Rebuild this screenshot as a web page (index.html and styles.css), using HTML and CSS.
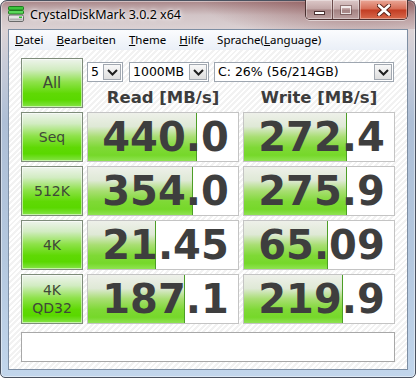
FILE: index.html
```html
<!DOCTYPE html>
<html lang="de">
<head>
  <meta charset="UTF-8">
  <title>CrystalDiskMark 3.0.2 x64</title>
  <link rel="stylesheet" href="styles.css">
</head>
<body>
  <div class="window">
    <div class="titlebar">
      <svg class="app-icon" width="16" height="16" viewBox="0 0 16 16">
        <rect x="0.5" y="0.5" width="15" height="3.5" rx="1" fill="#3cc43c" stroke="#1f7a1f"/>
        <rect x="0.5" y="4.5" width="15" height="3.5" rx="1" fill="#5ad85a" stroke="#1f7a1f"/>
        <rect x="0.5" y="9" width="15" height="6.5" rx="1.5" fill="#e4e4e4" stroke="#6a6a6a"/>
        <rect x="1.5" y="12.5" width="13" height="2" fill="#b0b0b0"/>
        <rect x="11" y="10.5" width="3" height="1.5" fill="#2fbf2f"/>
      </svg>
      <span class="title">CrystalDiskMark 3.0.2 x64</span>
      <div class="controls">
        <div class="ctl ctl-min"><span class="glyph-min"></span></div>
        <div class="ctl ctl-max"><span class="glyph-max"></span></div>
        <div class="ctl ctl-close">
          <svg width="14" height="12" viewBox="0 0 14 12">
            <path d="M2 1.5 L12 10.5 M12 1.5 L2 10.5" stroke="#5a2218" stroke-width="4.5" stroke-linecap="round"/>
            <path d="M2 1.5 L12 10.5 M12 1.5 L2 10.5" stroke="#fff" stroke-width="2.6" stroke-linecap="round"/>
          </svg>
        </div>
      </div>
    </div>

    <div class="client">
      <ul class="menu">
        <li><u>D</u>atei</li>
        <li><u>B</u>earbeiten</li>
        <li><u>T</u>heme</li>
        <li><u>H</u>ilfe</li>
        <li>Sprache(<u>L</u>anguage)</li>
      </ul>

      <div class="bench">
        <div class="btn btn-all">All</div>
        <div class="head">
          <div class="selects">
            <div class="sel sel-count"><span class="sel-text">5</span><span class="sel-arrow"><svg width="11" height="7" viewBox="0 0 11 7"><path d="M1 1 L5.5 5.5 L10 1" fill="none" stroke="#1e1e1e" stroke-width="2"/></svg></span></div>
            <div class="sel sel-size"><span class="sel-text">1000MB</span><span class="sel-arrow"><svg width="11" height="7" viewBox="0 0 11 7"><path d="M1 1 L5.5 5.5 L10 1" fill="none" stroke="#1e1e1e" stroke-width="2"/></svg></span></div>
            <div class="sel sel-drive"><span class="sel-text">C: 26% (56/214GB)</span><span class="sel-arrow"><svg width="11" height="7" viewBox="0 0 11 7"><path d="M1 1 L5.5 5.5 L10 1" fill="none" stroke="#1e1e1e" stroke-width="2"/></svg></span></div>
          </div>
          <div class="col-titles">
            <div>Read [MB/s]</div>
            <div>Write [MB/s]</div>
          </div>
        </div>

        <div class="btn">Seq</div>
        <div class="val"><div class="bar" style="width:109px"></div><span>440.0</span></div>
        <div class="val"><div class="bar" style="width:103px"></div><span>272.4</span></div>

        <div class="btn">512K</div>
        <div class="val"><div class="bar" style="width:105px"></div><span>354.0</span></div>
        <div class="val"><div class="bar" style="width:103px"></div><span>275.9</span></div>

        <div class="btn">4K</div>
        <div class="val"><div class="bar" style="width:68px"></div><span>21.45</span></div>
        <div class="val"><div class="bar" style="width:84px"></div><span>65.09</span></div>

        <div class="btn btn-two">4K<br>QD32</div>
        <div class="val"><div class="bar" style="width:97px"></div><span>187.1</span></div>
        <div class="val"><div class="bar" style="width:99px"></div><span>219.9</span></div>
      </div>

      <div class="comment"></div>
    </div>
  </div>
</body>
</html>
```

FILE: styles.css
```css
html, body {
  margin: 0;
  padding: 0;
  width: 416px;
  height: 378px;
  overflow: hidden;
  background: #fff;
}
.window {
  box-sizing: border-box;
  width: 416px;
  height: 378px;
  display: flex;
  flex-direction: column;
  padding: 0 7px 7px 7px;
  border: 1px solid #4a5260;
  border-radius: 7px 7px 5px 5px;
  background: linear-gradient(180deg, #a98688 0px, #d2c4c6 14px, #dcd3d5 30px, #c9ccd8 60px, #aebfd6 120px, #b4c8df 260px, #c2d6ec 378px);
  box-shadow: inset 0 0 0 1px rgba(255, 255, 255, 0.45);
}
.titlebar {
  height: 28px;
  display: flex;
  align-items: flex-start;
  flex: none;
  background: radial-gradient(ellipse 160px 40px at 360px 0, rgba(120, 50, 50, 0.55), rgba(120, 50, 50, 0) 100%);
  margin: 0 -7px;
  padding: 0 7px;
}
.app-icon {
  margin-top: 5px;
  flex: none;
}
.title {
  margin-left: 6px;
  margin-top: 5px;
  font-family: "Noto Sans", sans-serif;
  font-size: 12.5px;
  line-height: 17px;
  color: #000;
  text-shadow: 0 0 6px #fff, 0 0 3px #fff;
}
.controls {
  margin-left: auto;
  margin-top: -1px;
  display: flex;
  height: 19px;
  border: 1px solid #4a3030;
  border-top: none;
  border-radius: 0 0 5px 5px;
  overflow: hidden;
  box-shadow: 0 1px 0 rgba(255, 255, 255, 0.5);
}
.ctl {
  display: flex;
  align-items: center;
  justify-content: center;
  height: 19px;
  box-shadow: inset 0 0 0 1px rgba(255, 255, 255, 0.35);
}
.ctl-min, .ctl-max {
  width: 26px;
  background: linear-gradient(180deg, #dcc8c8 0%, #c2a6a6 48%, #a48282 52%, #bca0a0 100%);
  border-right: 1px solid #6a4a4a;
}
.ctl-close {
  width: 47px;
  background: linear-gradient(180deg, #eaa898 0%, #d66c55 48%, #c23c22 52%, #d8694c 100%);
}
.glyph-min {
  width: 9px;
  height: 2px;
  margin-top: 7px;
  background: #fff;
  border: 1px solid #4a3030;
}
.glyph-max {
  width: 8px;
  height: 5px;
  border: 1px solid #fff;
  border-top-width: 2px;
  outline: 1px solid rgba(70, 40, 40, 0.6);
  opacity: 0.75;
}
.client {
  flex: 1;
  display: flex;
  flex-direction: column;
  border: 1px solid #7d8ea3;
  background: repeating-linear-gradient(135deg, #ffffff 0px, #ffffff 2px, #f2f2f2 2px, #f2f2f2 4px);
}
.menu {
  list-style: none;
  margin: 0;
  padding: 0 0 0 6px;
  height: 20px;
  display: flex;
  align-items: center;
  background: linear-gradient(180deg, #fbfcfe, #eaeff7);
  font-family: "Noto Sans", sans-serif;
  font-size: 11.5px;
  color: #000;
}
.menu li {
  margin-right: 13px;
  line-height: 18px;
}
.bench {
  display: grid;
  grid-template-columns: 62px 152px 152px;
  grid-auto-rows: 50px;
  gap: 4px;
  margin: 8px 0 0 12px;
}
.btn {
  box-sizing: border-box;
  display: flex;
  align-items: center;
  justify-content: center;
  text-align: center;
  border: 1px solid #7e8c7a;
  box-shadow: inset 0 0 0 1px rgba(255, 255, 255, 0.55);
  background: linear-gradient(180deg, #eef4ec 0%, #d2ecc2 22%, #8ee24a 48%, #5fd904 72%, #5ad800 85%, #86e448 100%);
  font-family: "DejaVu Sans", sans-serif;
  font-size: 14px;
  color: #3f4838;
}
.btn-all {
  font-size: 15px;
}
.btn-two {
  line-height: 18px;
}
.head {
  grid-column: 2 / 4;
  display: flex;
  flex-direction: column;
}
.selects {
  display: flex;
  margin-top: 4px;
  height: 20px;
}
.sel {
  box-sizing: border-box;
  display: flex;
  height: 20px;
  border: 1px solid #9ea6b0;
  background: #fff;
  font-family: "DejaVu Sans", sans-serif;
  font-size: 12.5px;
  color: #000;
}
.sel-count { width: 36px; margin-right: 6px; }
.sel-size { width: 80px; margin-right: 5px; }
.sel-drive { width: 180px; }
.sel-text {
  flex: 1;
  padding-left: 3px;
  line-height: 18px;
  white-space: nowrap;
}
.sel-arrow {
  box-sizing: border-box;
  width: 18px;
  margin: 1px;
  display: flex;
  align-items: center;
  justify-content: center;
  border: 1px solid #a2a8b0;
  background: linear-gradient(180deg, #f8f8f8, #dedede);
}
.col-titles {
  display: grid;
  grid-template-columns: 152px 152px;
  gap: 4px;
  margin-top: 6px;
  font-family: "DejaVu Sans", sans-serif;
  font-weight: bold;
  font-size: 16.5px;
  line-height: 20px;
  color: #3c3c3c;
  text-align: center;
}
.val {
  box-sizing: border-box;
  position: relative;
  border: 1px solid #c4c4c4;
  background: #fff;
  padding-left: 5px;
  text-align: center;
  font-family: "DejaVu Sans", sans-serif;
  font-weight: bold;
  font-size: 40px;
  line-height: 48px;
  color: #3e3e3e;
  overflow: hidden;
}
.val span {
  position: relative;
}
.bar {
  position: absolute;
  left: 0;
  top: 0;
  bottom: 0;
  box-sizing: border-box;
  border-right: 1px solid #4c9e26;
  background: linear-gradient(180deg, #eef0ea 0%, #dfe9d6 28%, #a8de72 50%, #7fd936 72%, #76d82a 88%, #8fe352 100%);
}
.comment {
  box-sizing: border-box;
  width: 374px;
  height: 30px;
  margin: 8px 0 0 12px;
  border: 1px solid #a8a8a8;
  background: #fff;
}
```
